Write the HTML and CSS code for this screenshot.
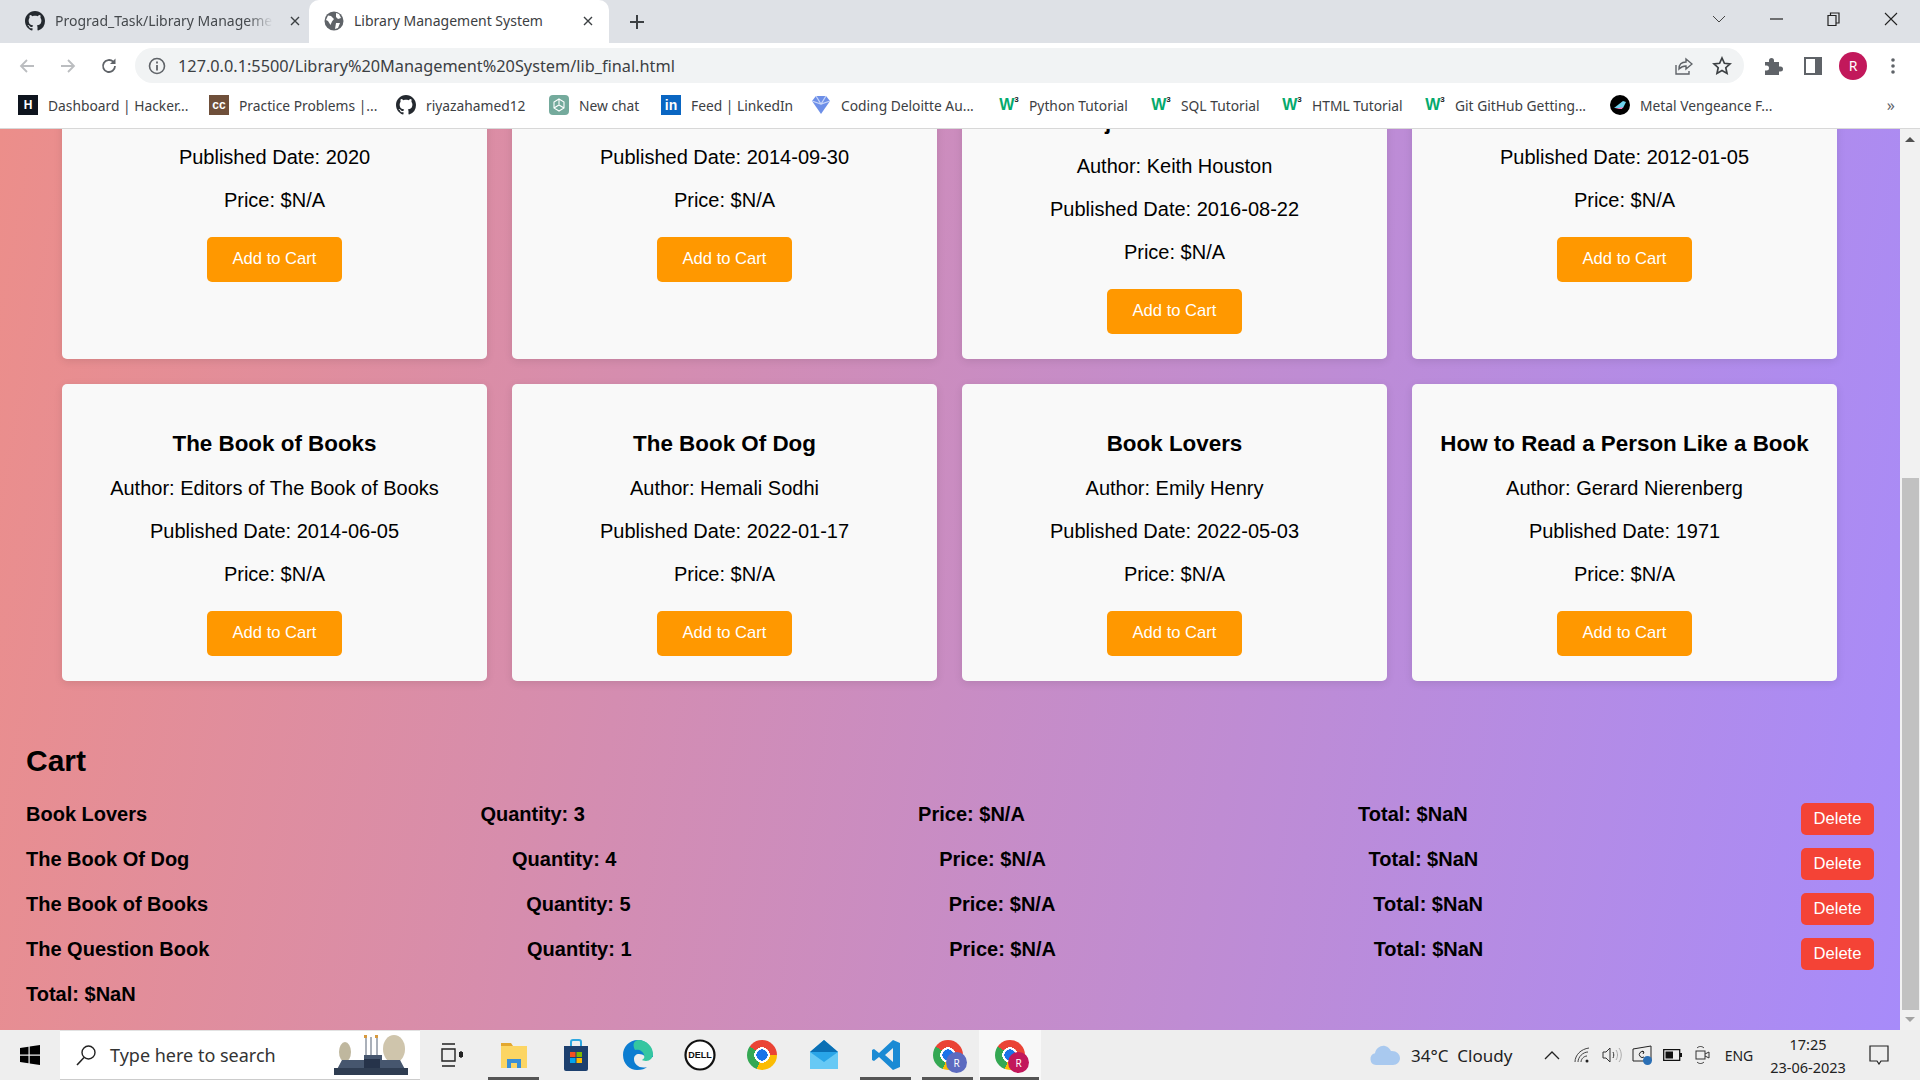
FILE: index.html
```html
<!DOCTYPE html>
<html>
<head>
    <title>Library Management System</title>
    <link rel="stylesheet" href="styles.css">
</head>
<body>
    <svg class="sprites" width="0" height="0">
        <symbol id="github" viewBox="0 0 16 16"><path d="M8 0C3.58 0 0 3.58 0 8c0 3.54 2.29 6.53 5.47 7.59.4.07.55-.17.55-.38 0-.19-.01-.82-.01-1.49-2.01.37-2.53-.49-2.69-.94-.09-.23-.48-.94-.82-1.13-.28-.15-.68-.52-.01-.53.63-.01 1.08.58 1.23.82.72 1.21 1.87.87 2.33.66.07-.52.28-.87.51-1.07-1.78-.2-3.64-.89-3.64-3.95 0-.87.31-1.59.82-2.15-.08-.2-.36-1.02.08-2.12 0 0 .67-.21 2.2.82.64-.18 1.32-.27 2-.27.68 0 1.36.09 2 .27 1.53-1.04 2.2-.82 2.2-.82.44 1.1.16 1.92.08 2.12.51.56.82 1.27.82 2.15 0 3.07-1.87 3.75-3.65 3.95.29.25.54.73.54 1.48 0 1.07-.01 1.93-.01 2.2 0 .21.15.46.55.38A8.013 8.013 0 0016 8c0-4.42-3.58-8-8-8z"/></symbol>
        <symbol id="close" viewBox="0 0 12 12"><path d="M2 2l8 8M10 2l-8 8" fill="none" stroke="currentColor" stroke-width="1.4"/></symbol>
    </svg>

    <div class="tabstrip">
        <div class="tab tab-first">
            <svg class="tab-icon gh"><use href="#github"/></svg>
            <span class="tab-title fade">Prograd_Task/Library Management</span>
            <svg class="tab-close"><use href="#close"/></svg>
        </div>
        <div class="tab tab-active">
            <svg class="tab-icon" viewBox="0 0 20 20"><circle cx="10" cy="10" r="9.5" fill="#5f6368"/><path d="M4 4.5l3 .5 3 3-2 2.5-1.5 3.5L4 10l-2-1zM12 2l3 1 2 4-3 1-2-2zM12 12l4 0-2 5-3 1z" fill="#fff"/></svg>
            <span class="tab-title">Library Management System</span>
            <svg class="tab-close"><use href="#close"/></svg>
        </div>
        <svg class="tab-new" viewBox="0 0 16 16"><path d="M8 1v14M1 8h14" stroke="#3c4043" stroke-width="2" fill="none"/></svg>
        <div class="window-controls">
            <div class="win-btn"><svg width="14" height="8" viewBox="0 0 14 8"><path d="M1 1l6 6 6-6" fill="none" stroke="#444" stroke-width="1"/></svg></div>
            <div class="win-btn"><svg width="13" height="2" viewBox="0 0 13 2"><path d="M0 1h13" stroke="#222" stroke-width="1.2"/></svg></div>
            <div class="win-btn"><svg width="13" height="14" viewBox="0 0 13 14"><path d="M1 3.5h8v10H1zM3.5 3.5V1h8.5v10H9" fill="none" stroke="#222" stroke-width="1.2"/></svg></div>
            <div class="win-btn"><svg width="14" height="14" viewBox="0 0 14 14"><path d="M1 1l12 12M13 1L1 13" stroke="#222" stroke-width="1.1"/></svg></div>
        </div>
    </div>

    <div class="toolbar">
        <div class="nav-btn"><svg width="18" height="18" viewBox="0 0 18 18"><path d="M16 9H3M9 3L3 9l6 6" fill="none" stroke="#bbbdc0" stroke-width="1.8"/></svg></div>
        <div class="nav-btn"><svg width="18" height="18" viewBox="0 0 18 18"><path d="M2 9h13M9 3l6 6-6 6" fill="none" stroke="#bbbdc0" stroke-width="1.8"/></svg></div>
        <div class="nav-btn"><svg width="18" height="18" viewBox="0 0 18 18"><path d="M15 9a6 6 0 1 1-1.8-4.3" fill="none" stroke="#5f6368" stroke-width="1.8"/><path d="M15.5 1.5v5.5H10z" fill="#5f6368"/></svg></div>
        <div class="omnibox">
            <svg class="omni-info" viewBox="0 0 18 18"><circle cx="9" cy="9" r="7.5" fill="none" stroke="#5f6368" stroke-width="1.6"/><path d="M9 8v5.5M9 4.6v1.8" stroke="#5f6368" stroke-width="1.8"/></svg>
            <span class="omni-url">127.0.0.1:5500/Library%20Management%20System/lib_final.html</span>
            <svg class="omni-action" viewBox="0 0 20 20"><path d="M3 9v9h13v-3M6 13c0-5 3-7 7-7V3l6 5-6 5v-3c-3 0-5 1-7 3z" fill="none" stroke="#5f6368" stroke-width="1.4"/></svg>
            <svg class="omni-action" viewBox="0 0 20 20"><path d="M10 2l2.4 5.3 5.6.6-4.2 3.8 1.2 5.7L10 14.500l-5 2.900 1.200-5.700L2 7.900l5.600-.6z" fill="none" stroke="#3c4043" stroke-width="1.700"/></svg>
        </div>
        <div class="tool-btn"><svg width="20" height="20" viewBox="0 0 20 20"><path d="M2 6h4V4.500a2.500 2.500 0 0 1 5 0V6h5v4.500h1.500a2.500 2.500 0 0 1 0 5H16V19H2v-4.500h1.500a2.500 2.500 0 0 0 0-5H2z" fill="#5f6368"/></svg></div>
        <div class="tool-btn"><svg width="18" height="18" viewBox="0 0 18 18"><path d="M1 1h16v16H1z" fill="#fff" stroke="#5f6368" stroke-width="2"/><path d="M11 1h6v16h-6z" fill="#5f6368"/></svg></div>
        <div class="tool-btn"><span class="avatar">R</span></div>
        <div class="tool-btn"><svg width="4" height="18" viewBox="0 0 4 18"><circle cx="2" cy="3" r="1.800" fill="#5f6368"/><circle cx="2" cy="9" r="1.800" fill="#5f6368"/><circle cx="2" cy="15" r="1.800" fill="#5f6368"/></svg></div>
    </div>

    <div class="bookmarks">
        <div class="bookmark"><span class="fav fav-hr">H</span>Dashboard | Hacker...</div>
        <div class="bookmark"><span class="fav fav-cc">cc</span>Practice Problems |...</div>
        <div class="bookmark"><svg class="fav gh"><use href="#github"/></svg>riyazahamed12</div>
        <div class="bookmark"><span class="fav fav-gpt"><svg width="14" height="14" viewBox="0 0 14 14"><path d="M7 1l5 3v6l-5 3-5-3V4zM7 1v6M2 10l5-3 5 3" fill="none" stroke="#fff" stroke-width="1.100"/></svg></span>New chat</div>
        <div class="bookmark"><span class="fav fav-in">in</span>Feed | LinkedIn</div>
        <div class="bookmark"><svg class="fav" viewBox="0 0 20 20"><path d="M1 6l4-5h10l4 5-9 13z" fill="#6d8fe8"/><path d="M5 1l5 8 5-8M1 6l9 3 9-3" fill="none" stroke="#c9d6f8" stroke-width="1.200"/></svg>Coding Deloitte Au...</div>
        <div class="bookmark"><span class="fav fav-w3">W<sup>3</sup></span>Python Tutorial</div>
        <div class="bookmark"><span class="fav fav-w3">W<sup>3</sup></span>SQL Tutorial</div>
        <div class="bookmark"><span class="fav fav-w3">W<sup>3</sup></span>HTML Tutorial</div>
        <div class="bookmark"><span class="fav fav-w3">W<sup>3</sup></span>Git GitHub Getting...</div>
        <div class="bookmark"><svg class="fav" viewBox="0 0 20 20"><circle cx="10" cy="10" r="10" fill="#000"/><path d="M4 13l9-7 3 1-3 6z" fill="#6fd3ee"/><path d="M5 14l8-2-1 2z" fill="#f07ab8"/></svg>Metal Vengeance F...</div>
        <div class="bookmark-more">»</div>
    </div>

    <div class="viewport">
        <div class="page">
            <div class="book-grid">
                <div class="book-card">
                    <h2>The Book Thief</h2>
                    <p>Author: Markus Zusak</p>
                    <p>Published Date: 2020</p>
                    <p>Price: $N/A</p>
                    <button class="add-btn">Add to Cart</button>
                </div>
                <div class="book-card">
                    <h2>The Question Book</h2>
                    <p>Author: Mikael Krogerus</p>
                    <p>Published Date: 2014-09-30</p>
                    <p>Price: $N/A</p>
                    <button class="add-btn">Add to Cart</button>
                </div>
                <div class="book-card">
                    <h2>The Book: A Cover-to-Cover Exploration of the Most Powerful Object of Our Time</h2>
                    <p>Author: Keith Houston</p>
                    <p>Published Date: 2016-08-22</p>
                    <p>Price: $N/A</p>
                    <button class="add-btn">Add to Cart</button>
                </div>
                <div class="book-card">
                    <h2>The Book of Answers</h2>
                    <p>Author: Carol Bolt</p>
                    <p>Published Date: 2012-01-05</p>
                    <p>Price: $N/A</p>
                    <button class="add-btn">Add to Cart</button>
                </div>
                <div class="book-card">
                    <h2>The Book of Books</h2>
                    <p>Author: Editors of The Book of Books</p>
                    <p>Published Date: 2014-06-05</p>
                    <p>Price: $N/A</p>
                    <button class="add-btn">Add to Cart</button>
                </div>
                <div class="book-card">
                    <h2>The Book Of Dog</h2>
                    <p>Author: Hemali Sodhi</p>
                    <p>Published Date: 2022-01-17</p>
                    <p>Price: $N/A</p>
                    <button class="add-btn">Add to Cart</button>
                </div>
                <div class="book-card">
                    <h2>Book Lovers</h2>
                    <p>Author: Emily Henry</p>
                    <p>Published Date: 2022-05-03</p>
                    <p>Price: $N/A</p>
                    <button class="add-btn">Add to Cart</button>
                </div>
                <div class="book-card">
                    <h2>How to Read a Person Like a Book</h2>
                    <p>Author: Gerard Nierenberg</p>
                    <p>Published Date: 1971</p>
                    <p>Price: $N/A</p>
                    <button class="add-btn">Add to Cart</button>
                </div>
            </div>

            <div class="cart">
                <h2>Cart</h2>
                <div class="cart-row">
                    <span>Book Lovers</span><span>Quantity: 3</span><span>Price: $N/A</span><span>Total: $NaN</span>
                    <button class="delete-btn">Delete</button>
                </div>
                <div class="cart-row">
                    <span>The Book Of Dog</span><span>Quantity: 4</span><span>Price: $N/A</span><span>Total: $NaN</span>
                    <button class="delete-btn">Delete</button>
                </div>
                <div class="cart-row">
                    <span>The Book of Books</span><span>Quantity: 5</span><span>Price: $N/A</span><span>Total: $NaN</span>
                    <button class="delete-btn">Delete</button>
                </div>
                <div class="cart-row">
                    <span>The Question Book</span><span>Quantity: 1</span><span>Price: $N/A</span><span>Total: $NaN</span>
                    <button class="delete-btn">Delete</button>
                </div>
                <div class="cart-total">Total: $NaN</div>
            </div>
        </div>
        <div class="scrollbar">
            <span class="arrow-up"></span>
            <div class="thumb"></div>
            <span class="arrow-down"></span>
        </div>
    </div>

    <div class="taskbar">
        <div class="start">
            <svg width="20" height="20" viewBox="0 0 20 20"><path d="M0 3l8.500-1.300v7.800H0zM9.700 1.500L20 0v9.500H9.700zM0 10.700h8.500v7.600L0 17zM9.700 10.700H20V20L9.700 18.500z" fill="#000"/></svg>
        </div>
        <div class="search">
            <svg class="search-icon" viewBox="0 0 22 22"><circle cx="13.500" cy="8.500" r="6.500" fill="none" stroke="#222" stroke-width="1.400"/><path d="M9 13.500L2 21" stroke="#222" stroke-width="1.600"/></svg>
            <span class="search-text">Type here to search</span>
            <svg class="search-art" viewBox="0 0 74 40"><ellipse cx="11" cy="17" rx="6" ry="10" fill="#bfb79e"/><ellipse cx="60" cy="14" rx="11" ry="14" fill="#cfc5ac"/><path d="M32 2v22M37 2v22M43 2v22" stroke="#8f97a3" stroke-width="1.500"/><path d="M30 0h3v3h-3zM41 0h3v3h-3z" fill="#d89a3e"/><path d="M8 25h22v-5h18v5h18l8 15H0z" fill="#46566e"/><path d="M0 33h74v7H0z" fill="#2f3d52"/><path d="M30 24h16v9H30z" fill="#26334a"/></svg>
        </div>
        <div class="task-item"><svg width="22" height="24" viewBox="0 0 22 24"><path d="M1 1h13M1 23h13M1 6h13v12H1zM20 8v7" fill="none" stroke="#222" stroke-width="1.400"/><path d="M18 9h4v5h-4z" fill="#222"/></svg></div>
        <div class="task-item is-open"><svg width="30" height="30" viewBox="0 0 30 30"><path d="M2 3h10l2 3H2z" fill="#e3a72f"/><path d="M2 6h26v22H2z" fill="#fcd563"/><path d="M8 28v-9h14v9h-4v-5h-6v5z" fill="#3b8fd6"/></svg></div>
        <div class="task-item"><svg width="30" height="32" viewBox="0 0 30 32"><path d="M10 7V3a2 2 0 0 1 2-2h6a2 2 0 0 1 2 2v4" fill="none" stroke="#2ea7e0" stroke-width="2"/><path d="M3 7h24v23a2 2 0 0 1-2 2H5a2 2 0 0 1-2-2z" fill="#1c3f6e"/><path d="M9 13h5.500v5H9z" fill="#f25022"/><path d="M15.500 13H21v5h-5.500z" fill="#7fba00"/><path d="M9 19h5.500v5H9z" fill="#00a4ef"/><path d="M15.500 19H21v5h-5.500z" fill="#ffb900"/></svg></div>
        <div class="task-item"><svg width="32" height="32" viewBox="0 0 32 32"><path d="M16 1C7 1 1 8 1 16c0 9 7 15 14 15 5 0 8-1 10-3-7 2-13-2-13-8 0-3 2-5 5-5 5 0 6 3 6 3h8c0-9-6-17-15-17z" fill="#0c7dd1"/><path d="M16 1c9 0 15 7 15 14 0 4-3 7-7 7-2 0-4-1-4-1 2-1 3-3 2-5-1-4-5-6-9-5C10 5 12 2 16 1z" fill="#35c6a0"/></svg></div>
        <div class="task-item"><svg width="32" height="32" viewBox="0 0 32 32"><circle cx="16" cy="16" r="14.500" fill="#fff" stroke="#111" stroke-width="2.200"/><text x="16" y="19" class="dell-text">DELL</text></svg></div>
        <div class="task-item"><span class="chrome"></span></div>
        <div class="task-item"><svg width="30" height="32" viewBox="0 0 30 32"><path d="M15 1L1 13v17h28V13z" fill="#29a5e8"/><path d="M15 1L1 13h28z" fill="#0a6fb4"/><path d="M1 13l14 10 14-10v17H1z" fill="#67c9f5"/></svg></div>
        <div class="task-item is-open"><svg width="30" height="32" viewBox="0 0 30 32"><path d="M22 1l7 3v24l-7 3L8 18l-5 4-2-1V11l2-1 5 4zM22 9l-8 7 8 7z" fill="#1a8ad4" fill-rule="evenodd"/></svg></div>
        <div class="task-item is-open"><span class="chrome"><span class="profile profile-blue">R</span></span></div>
        <div class="task-item is-active"><span class="chrome"><span class="profile">R</span></span></div>
        <div class="tray">
            <div class="weather">
                <svg width="30" height="20" viewBox="0 0 30 20"><path d="M6 20a6 6 0 0 1-1-11.800C6 3 11 0 15 1c3 .5 5 3 6 5 5-.5 9 3 9 7 0 4-3 7-7 7z" fill="#a9c9ef"/></svg>
                <span>34°C&nbsp; Cloudy</span>
            </div>
            <div class="tray-cell"><svg width="16" height="10" viewBox="0 0 16 10"><path d="M1 9l7-7 7 7" fill="none" stroke="#222" stroke-width="1.300"/></svg></div>
            <div class="tray-cell"><svg width="16" height="16" viewBox="0 0 16 16"><path d="M1 15C1 8 7 2 15 1M4 15c0-5 5-10 10-10M7 15c0-3 3-6 6-6" fill="none" stroke="#444" stroke-width="1"/><circle cx="13" cy="14" r="1.500" fill="#222"/></svg></div>
            <div class="tray-cell"><svg width="20" height="16" viewBox="0 0 20 16"><path d="M1 5h3l4-4v14l-4-4H1z" fill="none" stroke="#333" stroke-width="1"/><path d="M11 5c1 2 1 4 0 6" fill="none" stroke="#333"/><path d="M14 3c2 3 2 7 0 10M17 1c3 4 3 10 0 14" fill="none" stroke="#aaa"/></svg></div>
            <div class="tray-cell"><svg width="20" height="20" viewBox="0 0 20 20"><path d="M1 4l18-3v15H1z" fill="none" stroke="#222"/><path d="M12 7a3 3 0 1 0 0 5M10 6l2 1-1 2" fill="none" stroke="#222"/><circle cx="15.500" cy="15.500" r="4.500" fill="#2b6fb5"/></svg></div>
            <div class="tray-cell"><svg width="19" height="12" viewBox="0 0 19 12"><path d="M.7.7h16v10.600H.7z" fill="none" stroke="#111" stroke-width="1.300"/><path d="M2.500 2.500H10v7H2.500z" fill="#111"/><path d="M17 4h2v4h-2z" fill="#111"/></svg></div>
            <div class="tray-cell"><svg width="15" height="20" viewBox="0 0 15 20"><rect x="1" y="6" width="9" height="8" fill="none" stroke="#333"/><path d="M10 9l4-2v6l-4-2" fill="none" stroke="#333"/><path d="M2 3c2-2 5-2 7 0M2 17c2 2 5 2 7 0" fill="none" stroke="#333"/></svg></div>
            <div class="tray-lang">ENG</div>
            <div class="tray-clock"><span>17:25</span><span>23-06-2023</span></div>
            <div class="tray-notify"><svg width="20" height="20" viewBox="0 0 20 20"><path d="M1 1h18v15h-7l-2 3-2-3H1z" fill="none" stroke="#222" stroke-width="1.200"/></svg></div>
        </div>
    </div>
</body>
</html>
```

FILE: styles.css
```css
* {
    box-sizing: border-box;
}

body {
    margin: 0;
    height: 1080px;
    overflow: hidden;
    display: flex;
    flex-direction: column;
    font-family: "Liberation Sans", Arial, sans-serif;
    background: #fff;
}

.sprites {
    position: absolute;
}

/* browser chrome */
.tabstrip {
    height: 43px;
    flex: none;
    display: flex;
    align-items: flex-end;
    padding-left: 14px;
    background: #dee1e6;
    font-family: "Noto Sans", sans-serif;
    font-size: 14px;
    color: #45494d;
}

.tab {
    height: 43px;
    width: 295px;
    padding-bottom: 2px;
    display: flex;
    align-items: center;
}

.tab-first {
    padding-left: 11px;
    padding-right: 8px;
}

.tab-first .tab-title {
    margin-right: 4px;
}

.tab-active {
    width: 300px;
    padding-left: 15px;
    padding-right: 15px;
    background: #fff;
    border-radius: 10px 10px 0 0;
    color: #3c4043;
}

.tab-icon {
    width: 20px;
    height: 20px;
    flex: none;
    margin-right: 10px;
}

.gh {
    fill: #24292f;
}

.tab-title {
    flex: 1;
    white-space: nowrap;
    overflow: hidden;
}

.fade {
    -webkit-mask-image: linear-gradient(to right, #000 88%, transparent);
    mask-image: linear-gradient(to right, #000 88%, transparent);
}

.tab-close {
    width: 12px;
    height: 12px;
    flex: none;
    margin-left: 12px;
    color: #3c4043;
}

.tab-new {
    width: 16px;
    height: 16px;
    margin: 0 0 13px 20px;
}

.window-controls {
    margin-left: auto;
    height: 43px;
    display: flex;
    align-items: flex-start;
}

.win-btn {
    width: 57.5px;
    height: 38px;
    display: flex;
    align-items: center;
    justify-content: center;
}

.toolbar {
    height: 42px;
    flex: none;
    display: flex;
    align-items: center;
    padding: 3px 7px 0 6px;
    background: #fff;
}

.nav-btn {
    width: 41px;
    display: flex;
    justify-content: center;
}

.omnibox {
    flex: 1;
    height: 35px;
    margin-left: 6px;
    padding: 0 12px 0 13px;
    display: flex;
    align-items: center;
    border-radius: 18px;
    background: #f1f3f4;
}

.omni-info {
    width: 18px;
    height: 18px;
    margin-right: 12px;
}

.omni-url {
    flex: 1;
    font-family: "Noto Sans", sans-serif;
    font-size: 16.3px;
    color: #3c4043;
}

.omni-action {
    width: 20px;
    height: 20px;
    margin-left: 19px;
}

.tool-btn {
    width: 40px;
    display: flex;
    justify-content: center;
}

.omnibox + .tool-btn {
    margin-left: 9px;
}

.avatar {
    width: 28px;
    height: 28px;
    border-radius: 50%;
    display: flex;
    align-items: center;
    justify-content: center;
    background: #c2185b;
    color: #fff;
    font-family: "Noto Sans", sans-serif;
    font-size: 14px;
}

.bookmarks {
    height: 44px;
    flex: none;
    padding: 0 0 3px 18px;
    display: grid;
    grid-template-columns: 191px 187px 153px 112px 150px 188px 152px 131px 143px 185px 167px 1fr;
    align-items: center;
    border-bottom: 1px solid #d8d8d8;
    background: #fff;
    font-family: "Noto Sans", sans-serif;
    font-size: 13.8px;
    color: #3c4043;
}

.bookmark {
    display: flex;
    align-items: center;
    white-space: nowrap;
}

.fav {
    width: 20px;
    height: 20px;
    flex: none;
    margin-right: 10px;
    display: flex;
    align-items: center;
    justify-content: center;
    font-family: "Liberation Sans", Arial, sans-serif;
    font-weight: bold;
    font-size: 12px;
}

.fav-hr {
    background: #0e141e;
    color: #fff;
}

.fav-cc {
    background: #6f4f3a;
    color: #fff;
}

.fav-gpt {
    background: #74aa9c;
    border-radius: 4px;
}

.fav-in {
    background: #0a66c2;
    color: #fff;
    font-size: 14px;
}

.fav-w3 {
    color: #04aa6d;
    font-size: 16px;
    font-weight: bold;
    letter-spacing: -1px;
}

.fav-w3 sup {
    align-self: flex-start;
    font-size: 8px;
    line-height: 10px;
    color: #222;
    letter-spacing: 0;
    margin-left: 1px;
}

.bookmark-more {
    justify-self: end;
    padding-right: 25px;
    font-size: 16px;
    color: #5f6368;
}

/* page */
.viewport {
    flex: 1;
    min-height: 0;
    display: flex;
    overflow: hidden;
}

.page {
    flex: 1;
    min-width: 0;
    background: linear-gradient(100deg, #ec8e8a, #a78bfa);
    color: #000;
}

.book-grid {
    margin: -119px 0 0 62px;
    display: grid;
    grid-template-columns: repeat(4, 425px);
    gap: 25px;
}

.book-card {
    padding: 25px;
    background: #f9f9f9;
    border-radius: 5px;
    box-shadow: 0 2px 8px rgba(0, 0, 0, 0.1);
    text-align: center;
}

.book-card h2 {
    margin: 22px 0 20px;
    font-size: 22.4px;
    line-height: 26px;
}

.book-card p {
    margin: 20px 0;
    font-size: 20px;
    line-height: 23px;
}

.add-btn {
    width: 135px;
    height: 45px;
    margin-top: 5px;
    padding: 0 0 2px;
    border: none;
    border-radius: 5px;
    background: #ff9800;
    color: #fff;
    font-family: inherit;
    font-size: 16.6px;
}

.cart {
    margin-top: 62px;
    padding: 0 26px;
}

.cart h2 {
    margin: 0 0 24px;
    font-size: 30px;
    line-height: 36px;
}

.cart-row {
    height: 32px;
    margin-bottom: 13px;
    display: flex;
    justify-content: space-between;
    align-items: flex-start;
    font-size: 20px;
    line-height: 23px;
    font-weight: bold;
}

.cart-total {
    font-size: 20px;
    line-height: 23px;
    font-weight: bold;
}

.delete-btn {
    width: 73px;
    height: 32px;
    padding: 0;
    border: none;
    border-radius: 5px;
    background: #f44336;
    color: #fff;
    font-family: inherit;
    font-size: 16.6px;
}

.scrollbar {
    width: 20px;
    flex: none;
    display: flex;
    flex-direction: column;
    align-items: center;
    background: #f1f1f1;
}

.thumb {
    width: 17px;
    height: 532px;
    margin-top: auto;
    background: #c1c1c1;
}

.arrow-up,
.arrow-down {
    width: 0;
    height: 0;
    border-left: 5px solid transparent;
    border-right: 5px solid transparent;
}

.arrow-up {
    margin-top: 8px;
    border-bottom: 5px solid #505050;
}

.arrow-down {
    margin: 7px 0 8px;
    border-top: 5px solid #a3a3a3;
}

/* windows taskbar */
.taskbar {
    height: 50px;
    flex: none;
    display: flex;
    align-items: stretch;
    background: #eeeeee;
    font-family: "Noto Sans", sans-serif;
    color: #222;
}

.start {
    width: 60px;
    display: flex;
    align-items: center;
    justify-content: center;
}

.search {
    width: 360px;
    margin-right: 1px;
    padding: 0 12px 0 15px;
    display: flex;
    align-items: center;
    background: #fff;
    border-top: 1px solid #e2e2e2;
    border-bottom: 1px solid #ccc;
    font-size: 18px;
}

.search-icon {
    width: 22px;
    height: 22px;
    margin-right: 13px;
}

.search-text {
    flex: 1;
    color: #333;
}

.search-art {
    width: 74px;
    height: 40px;
}

.task-item {
    position: relative;
    width: 62px;
    display: flex;
    align-items: center;
    justify-content: center;
}

.is-open::after {
    content: "";
    position: absolute;
    left: 5px;
    right: 6px;
    bottom: 0;
    height: 3px;
    background: #555;
}

.is-active {
    background: #f8f8f8;
}

.is-active::after {
    content: "";
    position: absolute;
    left: 1px;
    right: 2px;
    bottom: 0;
    height: 3px;
    background: #555;
}

.dell-text {
    font-family: "Liberation Sans", Arial, sans-serif;
    font-size: 9px;
    font-weight: bold;
    text-anchor: middle;
    fill: #111;
}

.chrome {
    position: relative;
    width: 30px;
    height: 30px;
    border-radius: 50%;
    background:
        radial-gradient(circle, #1a73e8 0 26%, #fff 27% 36%, transparent 37%),
        conic-gradient(from -55deg, #ea4335 0 145deg, #fbbc04 145deg 255deg, #34a853 255deg);
}

.profile {
    position: absolute;
    right: -4px;
    bottom: -3px;
    width: 21px;
    height: 21px;
    border-radius: 50%;
    display: flex;
    align-items: center;
    justify-content: center;
    background: #c2185b;
    color: #fff;
    font-size: 10px;
}

.profile-blue {
    background: #5c6bc0;
}

.tray {
    margin-left: auto;
    padding-right: 17px;
    display: flex;
    align-items: center;
}

.weather {
    width: 175px;
    padding-left: 8px;
    display: flex;
    align-items: center;
    gap: 11px;
    font-size: 17px;
}

.tray-cell {
    width: 30px;
    display: flex;
    justify-content: center;
}

.tray-lang {
    width: 44px;
    text-align: center;
    font-size: 14px;
}

.tray-clock {
    width: 94px;
    display: flex;
    flex-direction: column;
    align-items: center;
    gap: 5px;
    font-size: 14.5px;
    line-height: 18px;
}

.tray-notify {
    width: 48px;
    display: flex;
    justify-content: center;
}
```
